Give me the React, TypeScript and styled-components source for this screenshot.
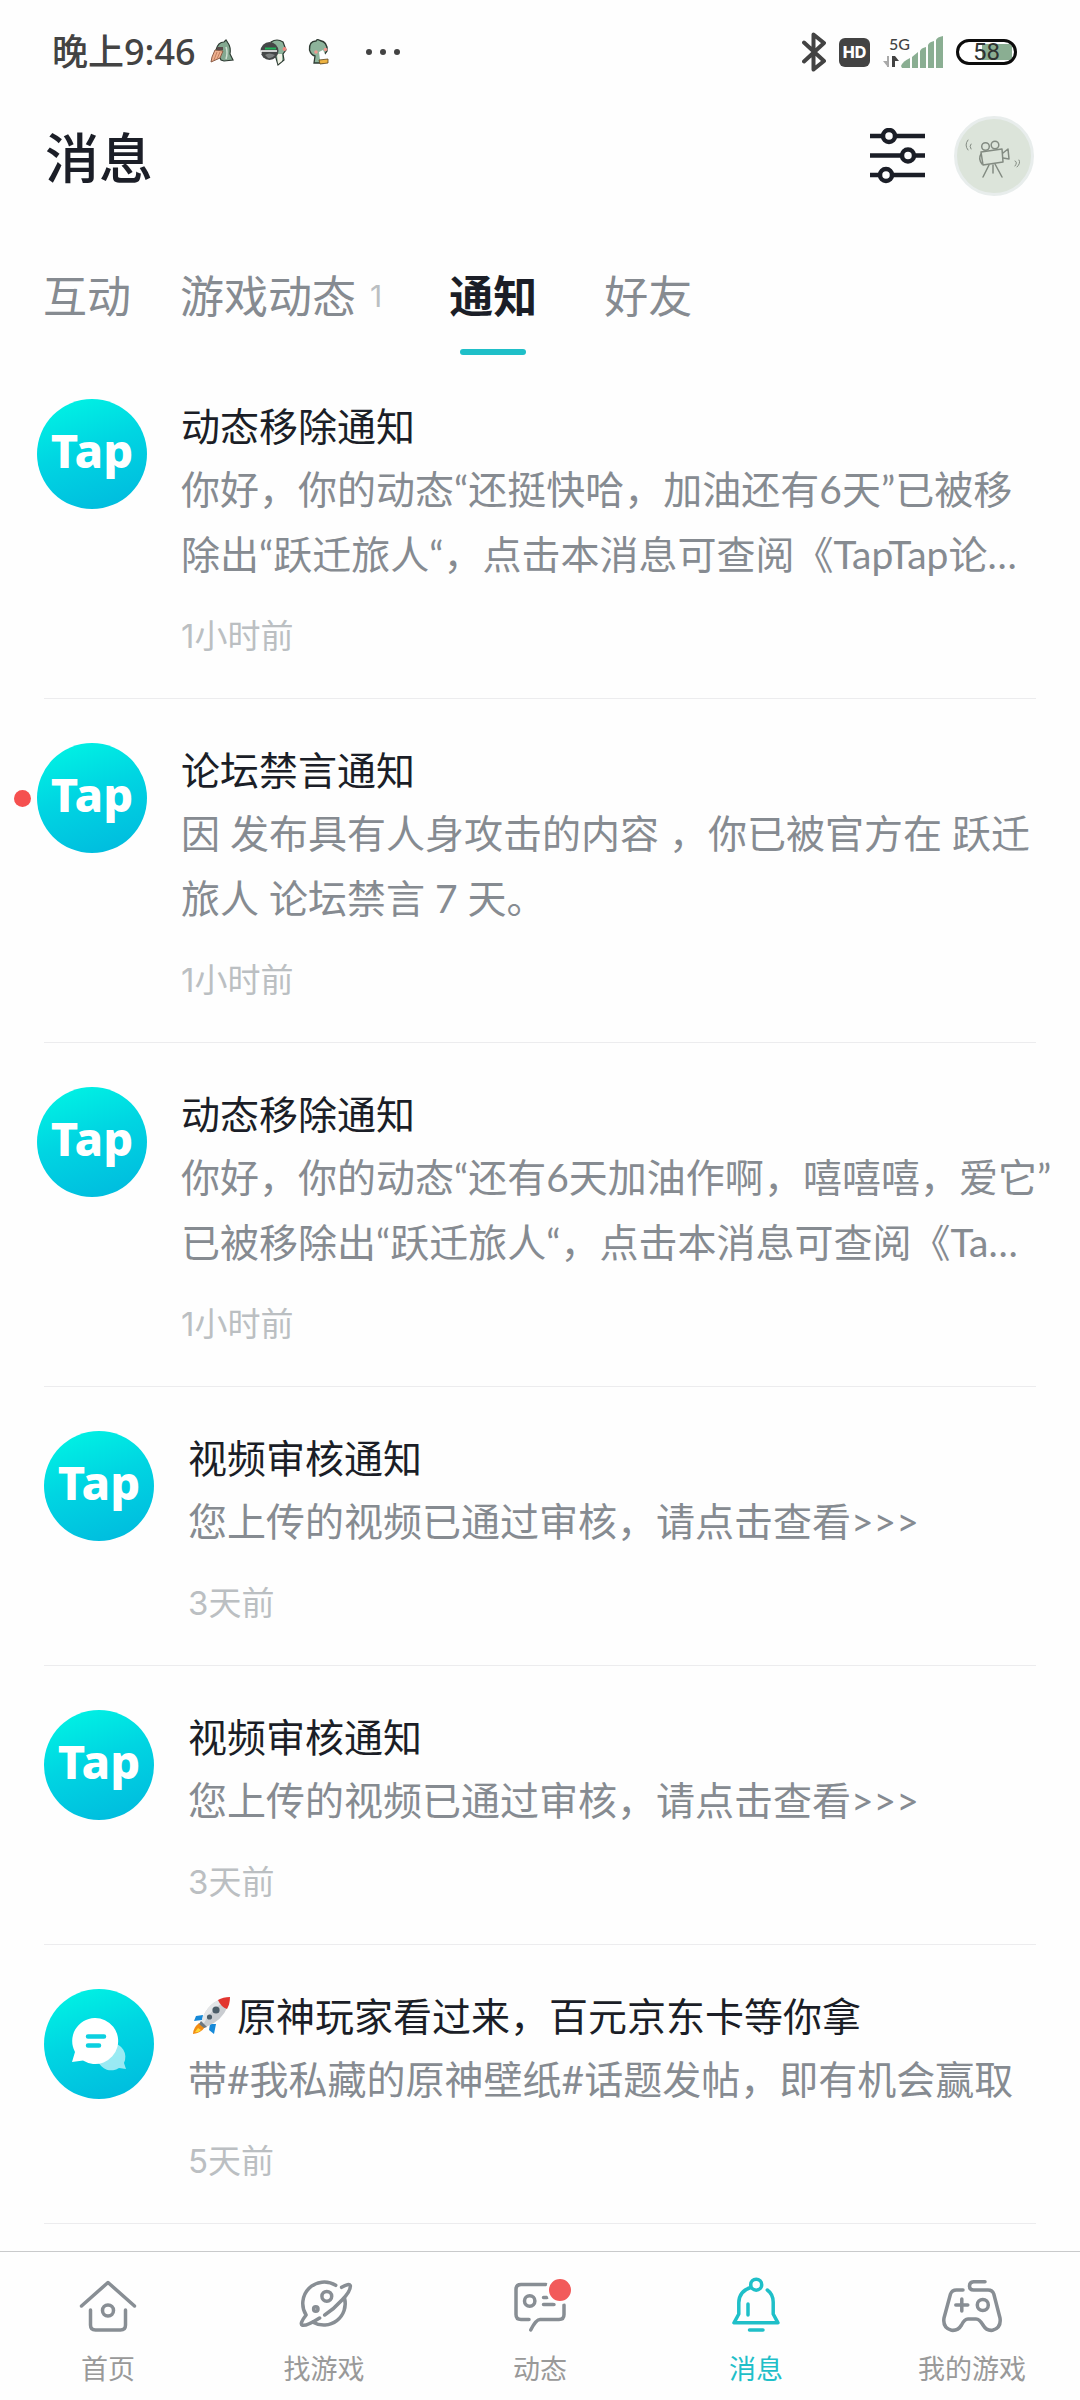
import React from "react";
import styled, { createGlobalStyle, css } from "styled-components";

const cjk = `"Noto Sans CJK SC", sans-serif`;

const colors = {
  ink: "#1b1e27",
  status: "#434343",
  body: "#868b91",
  faint: "#bbbfc2",
  accent: "#1fbfc8",
  alert: "#f5504f",
  line: "#ececee",
  navLine: "#c9cacb",
  navText: "#999999",
  navIcon: "#888e94",
  leaf: "#8aae92",
};

const GlobalStyle = createGlobalStyle`
  * { box-sizing: border-box; }
  body { margin: 0; background: #fefefe; font-family: Lato, ${cjk}; }
  button { border: 0; padding: 0; margin: 0; background: none; font: inherit; color: inherit; cursor: pointer; }
  a { color: inherit; text-decoration: none; }
  h1, h2, p { margin: 0; font-weight: 400; }
  ul { list-style: none; margin: 0; padding: 0; }
  svg { display: block; flex: none; }
`;

const Screen = styled.div`
  display: flex;
  flex-direction: column;
  min-height: 100vh;
`;

/* ---------- status bar ---------- */

const StatusBar = styled.div`
  display: flex;
  justify-content: space-between;
  align-items: center;
  height: 104px;
  padding: 0 63px 0 52px;
  color: ${colors.status};
`;

const StatusGroup = styled.div<{ $gap: number }>`
  display: flex;
  align-items: center;
  gap: ${(p) => p.$gap}px;
`;

const Clock = styled.time`
  font: 500 36px/50px "Noto Sans", ${cjk};
`;

const HdBadge = styled.span`
  width: 31px;
  height: 29px;
  border-radius: 6px;
  background: ${colors.status};
  color: #fff;
  font: 800 16px/29px Inter, sans-serif;
  text-align: center;
`;

const Signal = styled.div`
  display: grid;
  grid-template-columns: 18px 42px;
  grid-template-rows: 16px 16px;
`;

const Network = styled.span`
  justify-self: end;
  width: 12px;
  font: 500 16px/16px Lato, sans-serif;
`;

const Bars = styled.div`
  grid-column: 2;
  grid-row: 1 / 3;
`;

const Battery = styled.div`
  width: 61px;
  height: 26px;
  border: 3px solid #0c0c0c;
  border-radius: 13px;
  background: linear-gradient(90deg, #fff 23px, ${colors.leaf} 23px) 0 2px / 53px 16px no-repeat;
  background-clip: content-box;
  color: #2f3331;
  font: 400 24px/20px Roboto, sans-serif;
  text-align: center;
`;

/* ---------- header ---------- */

const Header = styled.header`
  display: flex;
  align-items: center;
  gap: 29px;
  height: 104px;
  padding: 0 46px 0 45px;
`;

const PageTitle = styled.h1`
  flex: 1;
  font: 500 54px/80px ${cjk};
  color: ${colors.ink};
`;

const Profile = styled.button`
  width: 80px;
  height: 80px;
  border: 3px solid #e8edec;
  border-radius: 50%;
  background: #dce4da;
`;

/* ---------- tabs ---------- */

const Tabs = styled.nav`
  display: flex;
  gap: 49px;
  padding: 55px 43px 0;
`;

const Tab = styled.button<{ $active?: boolean }>`
  display: flex;
  flex-direction: column;
  align-items: center;
  gap: 20px;
  font-size: 44px;
  line-height: 66px;
  color: ${colors.body};
  ${(p) =>
    p.$active &&
    css`
      margin: 0 18px;
      font-weight: 700;
      color: ${colors.ink};
    `}
  &::after {
    content: "";
    width: 66px;
    height: 6px;
    border-radius: 3px;
    background: ${(p) => (p.$active ? colors.accent : "transparent")};
  }
`;

const TabLabel = styled.span`
  display: flex;
  align-items: center;
  gap: 14px;
`;

const TabCount = styled.span`
  font: 400 30px/30px Inter, sans-serif;
  color: ${colors.faint};
`;

/* ---------- notices ---------- */

const List = styled.ul`
  flex: 1;
`;

const Item = styled.li`
  &::after {
    content: "";
    display: block;
    height: 1px;
    margin: 0 44px;
    background: ${colors.line};
  }
`;

const Notice = styled.a<{ $inset: number }>`
  display: flex;
  gap: 34px;
  padding: 44px 24px 40px ${(p) => p.$inset}px;
`;

const Badge = styled.span`
  position: relative;
  display: grid;
  place-items: center;
  flex: none;
  width: 110px;
  height: 110px;
  border-radius: 50%;
  background: linear-gradient(160deg, #00f4e4 4%, #00d5e2 45%, #00bade 96%);
`;

const UnreadDot = styled.i`
  position: absolute;
  left: -23px;
  top: 47px;
  width: 17px;
  height: 17px;
  border-radius: 50%;
  background: ${colors.alert};
`;

const Wordmark = styled.span`
  padding-bottom: 8px;
  font: 800 47px/56px "Noto Sans", sans-serif;
  color: #fff;
`;

const Copy = styled.div`
  flex: 1;
  min-width: 0;
`;

const Title = styled.h2`
  display: flex;
  align-items: center;
  margin-bottom: 4px;
  font-size: 39px;
  line-height: 54px;
  color: ${colors.ink};
`;

const Body = styled.p`
  font-size: 39px;
  line-height: 65px;
  white-space: pre-line;
  color: ${colors.body};
`;

const Ago = styled.time`
  display: block;
  margin-top: 27px;
  font: 400 33px/44px Inter, ${cjk};
  color: ${colors.faint};
`;

const RocketSlot = styled.span`
  padding: 0 7px 0 4px;
`;

/* ---------- bottom navigation ---------- */

const BottomNav = styled.nav`
  display: grid;
  grid-template-columns: repeat(5, 1fr);
  margin-top: 27px;
  padding: 23px 0 13px;
  border-top: 1px solid ${colors.navLine};
`;

const NavLink = styled.a<{ $active?: boolean }>`
  display: flex;
  flex-direction: column;
  align-items: center;
  gap: 16px;
  font-size: 27px;
  line-height: 36px;
  color: ${(p) => (p.$active ? colors.accent : colors.navText)};
  svg {
    stroke: ${(p) => (p.$active ? colors.accent : colors.navIcon)};
    overflow: visible;
  }
`;

/* ---------- drawings ---------- */

const DinoNoodles = () => (
  <svg width="24" height="30" viewBox="0 0 24 30">
    <path d="M6 13 Q8 5 14 5 L16 3 L18 6 Q21 10 20 17 L23 23 L14 24 L11 23Z" fill="#83a890" stroke="#2e3b33" strokeWidth="1.2" />
    <path d="M16 10 Q18 15 16 22" stroke="#cfe0d2" strokeWidth="1.5" fill="none" />
    <path d="M5 13 L13 14 L10 21 L1 25 L2 20Z" fill="#eeb08f" stroke="#8a5b45" strokeWidth="1" />
    <path d="M7 15 L4 23 M10 15 L7 22" stroke="#c27f5e" strokeWidth="1" />
    <path d="M7 10h6v3H7z" fill="#5a4a4a" />
  </svg>
);

const DinoBall = () => (
  <svg width="28" height="30" viewBox="0 0 28 30">
    <path d="M11 5 Q17 1 23 5 L26 13 L23 17 L24 23 L18 28 L16 21Z" fill="#8db39b" stroke="#2e3b33" strokeWidth="1.2" />
    <path d="M17 17 L22 17 L22 24 L18 27Z" fill="#f2f2e6" />
    <circle cx="24.500" cy="12" r="2" fill="#ef8a80" />
    <circle cx="9.500" cy="14" r="9" fill="#454747" />
    <path d="M5 18 Q9 15 15 18 Q12 22 8 21Z" fill="#7c7f7f" />
    <path d="M5 11.500h11" stroke="#21b35b" strokeWidth="2" />
    <path d="M1 17V14h16" stroke="#fff" strokeWidth="1.300" fill="none" />
  </svg>
);

const DinoBird = () => (
  <svg width="22" height="30" viewBox="0 0 22 30">
    <path d="M1.500 13 Q1 4 8 4 Q9 1.500 12 3.500 Q20 5 19 14 L16 18 L15 26 L6 26 L7 19 Q3 18 1.500 13Z" fill="#8db39b" stroke="#2e3b33" strokeWidth="1.300" />
    <path d="M11 15 L15 13 L19 21 L17 25 L12 23Z" fill="#fff" />
    <path d="M11 23 L20 22 L20 26 L12 27Z" fill="#eeb341" stroke="#5a4420" strokeWidth=".8" />
    <circle cx="8" cy="15" r="1.800" fill="#ef9a90" />
    <circle cx="17.500" cy="12.500" r="1.800" fill="#ef9a90" />
  </svg>
);

const Dots = () => (
  <svg width="34" height="8" viewBox="0 0 34 8" fill={colors.status}>
    <circle cx="3" cy="4" r="3" />
    <circle cx="17" cy="4" r="3" />
    <circle cx="31" cy="4" r="3" />
  </svg>
);

const Bluetooth = () => (
  <svg width="24" height="40" viewBox="0 0 24 40" fill="none" stroke={colors.status} strokeWidth="4" strokeLinecap="round" strokeLinejoin="round">
    <path d="M2 10.500 L22 29 L11.500 37.500 V2.500 L22 11 L2 29.500" />
  </svg>
);

const DataArrows = () => (
  <svg width="18" height="16" viewBox="0 0 18 16">
    <path d="M4 4v10L0 9h4zM4 4h2v11H4z" fill="#a9a9a9" />
    <path d="M9 4h3l4 5h-4v6H9z" fill={colors.status} />
  </svg>
);

const SignalBars = () => (
  <svg width="42" height="32" viewBox="0 0 42 32" fill={colors.leaf}>
    <path d="M0 30 Q2 25 9 22 V32 H1Z" />
    <path d="M11 21 L17 16 V32 H11Z" />
    <path d="M19 15 Q20 12 25 11 V32 H19Z" />
    <path d="M27 9 Q28 6 33 5 V32 H27Z" />
    <path d="M35 4 Q36 1 42 0 V32 H35Z" />
  </svg>
);

const Sliders = () => (
  <svg width="55" height="56" viewBox="0 0 55 56" fill="#fefefe" stroke={colors.ink} strokeWidth="4.500">
    <path d="M0 8H55M0 27.500H55M0 47H55" />
    <circle cx="19" cy="8" r="6" />
    <circle cx="38" cy="27.500" r="6" />
    <circle cx="16" cy="47" r="6" />
  </svg>
);

const Camera = () => (
  <svg width="74" height="74" viewBox="0 0 74 74" fill="none" stroke="#838b82" strokeWidth="1.500" strokeLinejoin="round" strokeLinecap="round">
    <path d="M24 33 L45 30 L46 43 L26 46Z" />
    <path d="M24 35 Q21 40 25 45" />
    <path d="M46 34 L51 30 L52 40 L46 39" />
    <circle cx="28.500" cy="27.500" r="3.800" />
    <circle cx="38" cy="26" r="3.800" />
    <path d="M32 46 L26 58M36 46 V54M38 45 L45 58" />
    <path d="M11 21 Q7 26 11 31M14 25 Q12 27 14 30M58 42 Q61 43 58 47M62 41 Q64 44 60 48" strokeWidth="1" />
  </svg>
);

const Bubbles = () => (
  <svg width="110" height="110" viewBox="0 0 110 110">
    <path d="M68 54 A14 14 0 0 1 80 74 L82 80 L75 79 A14 14 0 0 1 54 72Z" fill="#fff" opacity=".6" />
    <path d="M50.500 29 A23 23 0 1 1 39 71.500 L28 73 L31 63 A23 23 0 0 1 50.500 29Z" fill="#fff" />
    <path d="M44 47.500H60M44 56.500H55" stroke="#0bd0e0" strokeWidth="4.500" strokeLinecap="round" />
  </svg>
);

const Rocket = () => (
  <svg role="img" aria-label="火箭" width="38" height="38" viewBox="0 0 38 38">
    <path d="M11 18 L4 19 L2 24 L10 23ZM18 27 L17 33 L22 37 L24 27Z" fill="#1689d8" />
    <path d="M7 26 L13 30 Q9 36 1 37 Q1 31 7 26Z" fill="#f28c13" />
    <path d="M6 31 L9 33 Q6 36 3 35Z" fill="#fdd835" />
    <path d="M9 27 Q13 8 29 2 L36 9 Q30 24 14 30Z" fill="#c9ccd0" />
    <path d="M9 27 Q13 8 29 2 L32 5 Q18 13 11 28Z" fill="#e4e6e8" />
    <path d="M26 3 Q31 0 38 0 Q38 7 35 12 Q29 10 26 3Z" fill="#e2352f" />
    <path d="M9 24 L15 30 L12 31 L7 27Z" fill="#6d7780" />
    <circle cx="24" cy="13" r="3.600" fill="#4c5d68" />
    <circle cx="17.500" cy="20" r="2.600" fill="#4c5d68" />
  </svg>
);

const NavIcon = ({ children }: { children: React.ReactNode }) => (
  <svg width="60" height="60" viewBox="0 0 60 60" fill="none" strokeWidth="3.500" strokeLinecap="round" strokeLinejoin="round">
    {children}
  </svg>
);

const HomeIcon = () => (
  <NavIcon>
    <path d="M3.500 31 L30 7.500 L56.500 31" />
    <path d="M12.500 35 V50 Q12.500 55 17.500 55 H42.500 Q47.500 55 47.500 50 V35" />
    <circle cx="30" cy="35.500" r="5.500" />
  </NavIcon>
);

const PlanetIcon = () => (
  <NavIcon>
    <path d="M41.700 10.300 A21.500 21.500 0 0 0 12.100 40 Q5 49 8.500 50.300 Q13 51 25.600 43" />
    <path d="M47.600 12.300 Q55 8 56.300 10.500 Q57 16 48 25 Q40 34 30.700 40" />
    <path d="M50.500 23 A21.500 21.500 0 0 1 19 47.200" />
    <circle cx="32.800" cy="21.300" r="4.900" />
    <circle cx="21.800" cy="34" r="2.200" />
  </NavIcon>
);

const FeedIcon = () => (
  <NavIcon>
    <path d="M36 9.500 H11 Q6 9.500 6 14.500 V39.500 Q6 44.500 11 44.500 H19" />
    <path d="M20.700 55 Q26 44.500 30 44.500 H49 Q54 44.500 54 39.500 V30" />
    <circle cx="19.700" cy="26" r="5.200" />
    <path d="M33.500 22.500 H37M33.500 29.500 H44" />
    <circle cx="50" cy="15" r="12.500" fill="#f25a5a" stroke="#fefefe" strokeWidth="3" />
  </NavIcon>
);

const BellIcon = () => (
  <NavIcon>
    <circle cx="30.200" cy="9.700" r="5.500" />
    <path d="M24.700 12.500 Q13 16 12.800 27.700 V39 L8 47.800 H52 L47.200 39 V27 Q47 19 41.300 15" />
    <path d="M22 29 V40M23.500 55 H37" />
  </NavIcon>
);

const PadIcon = () => (
  <NavIcon>
    <path d="M43 6.700 H31.500 Q27.500 7 27.500 11 Q27.500 15 31.500 15 H46 Q50.500 15 51.800 19 L58 43 Q59.500 53 50.500 55.300 Q44.500 56 41 50 Q37.500 44 34 44 H26 Q22.500 44 19.500 50 Q16 56 9.500 55.300 Q.5 53 2 43 L8.500 19 Q10 15 14.500 15 H21" />
    <path d="M19.800 24 V36M13.800 30 H25.800" />
    <circle cx="40.800" cy="30" r="5.500" />
  </NavIcon>
);

/* ---------- data ---------- */

type Entry = {
  title: string;
  body: string;
  ago: string;
  inset: number;
  unread?: boolean;
  campaign?: boolean;
};

const entries: Entry[] = [
  {
    title: "动态移除通知",
    body: "你好，你的动态“还挺快哈，加油还有6天”已被移\n除出“跃迁旅人“，点击本消息可查阅《TapTap论…",
    ago: "1小时前",
    inset: 37,
  },
  {
    title: "论坛禁言通知",
    body: "因 发布具有人身攻击的内容 ，你已被官方在 跃迁\n旅人 论坛禁言 7 天。",
    ago: "1小时前",
    inset: 37,
    unread: true,
  },
  {
    title: "动态移除通知",
    body: "你好，你的动态“还有6天加油作啊，嘻嘻嘻，爱它”\n已被移除出“跃迁旅人“，点击本消息可查阅《Ta…",
    ago: "1小时前",
    inset: 37,
  },
  { title: "视频审核通知", body: "您上传的视频已通过审核，请点击查看>>>", ago: "3天前", inset: 44 },
  { title: "视频审核通知", body: "您上传的视频已通过审核，请点击查看>>>", ago: "3天前", inset: 44 },
  {
    title: "原神玩家看过来，百元京东卡等你拿",
    body: "带#我私藏的原神壁纸#话题发帖，即有机会赢取",
    ago: "5天前",
    inset: 44,
    campaign: true,
  },
];

const tabs = [
  { label: "互动" },
  { label: "游戏动态", count: 1 },
  { label: "通知", active: true },
  { label: "好友" },
];

const navItems = [
  { label: "首页", Icon: HomeIcon },
  { label: "找游戏", Icon: PlanetIcon },
  { label: "动态", Icon: FeedIcon },
  { label: "消息", Icon: BellIcon, active: true },
  { label: "我的游戏", Icon: PadIcon },
];

export default function App() {
  return (
    <Screen lang="zh-CN">
      <GlobalStyle />
      <StatusBar>
        <StatusGroup $gap={26}>
          <StatusGroup $gap={14}>
            <Clock>晚上9:46</Clock>
            <DinoNoodles />
          </StatusGroup>
          <StatusGroup $gap={36}>
            <StatusGroup $gap={20}>
              <DinoBall />
              <DinoBird />
            </StatusGroup>
            <Dots />
          </StatusGroup>
        </StatusGroup>
        <StatusGroup $gap={13}>
          <Bluetooth />
          <HdBadge>HD</HdBadge>
          <Signal>
            <Network>5G</Network>
            <DataArrows />
            <Bars>
              <SignalBars />
            </Bars>
          </Signal>
          <Battery>58</Battery>
        </StatusGroup>
      </StatusBar>

      <Header>
        <PageTitle>消息</PageTitle>
        <button type="button" aria-label="筛选">
          <Sliders />
        </button>
        <Profile type="button" aria-label="个人主页">
          <Camera />
        </Profile>
      </Header>

      <Tabs>
        {tabs.map((t) => (
          <Tab key={t.label} type="button" $active={t.active}>
            <TabLabel>
              {t.label}
              {t.count && <TabCount>{t.count}</TabCount>}
            </TabLabel>
          </Tab>
        ))}
      </Tabs>

      <List>
        {entries.map((e, i) => (
          <Item key={i}>
            <Notice href="#" $inset={e.inset}>
              <Badge>
                {e.unread && <UnreadDot />}
                {e.campaign ? <Bubbles /> : <Wordmark>Tap</Wordmark>}
              </Badge>
              <Copy>
                <Title>
                  {e.campaign && (
                    <RocketSlot>
                      <Rocket />
                    </RocketSlot>
                  )}
                  {e.title}
                </Title>
                <Body>{e.body}</Body>
                <Ago>{e.ago}</Ago>
              </Copy>
            </Notice>
          </Item>
        ))}
      </List>

      <BottomNav>
        {navItems.map(({ label, Icon, active }) => (
          <NavLink key={label} href="#" $active={active}>
            <Icon />
            {label}
          </NavLink>
        ))}
      </BottomNav>
    </Screen>
  );
}
